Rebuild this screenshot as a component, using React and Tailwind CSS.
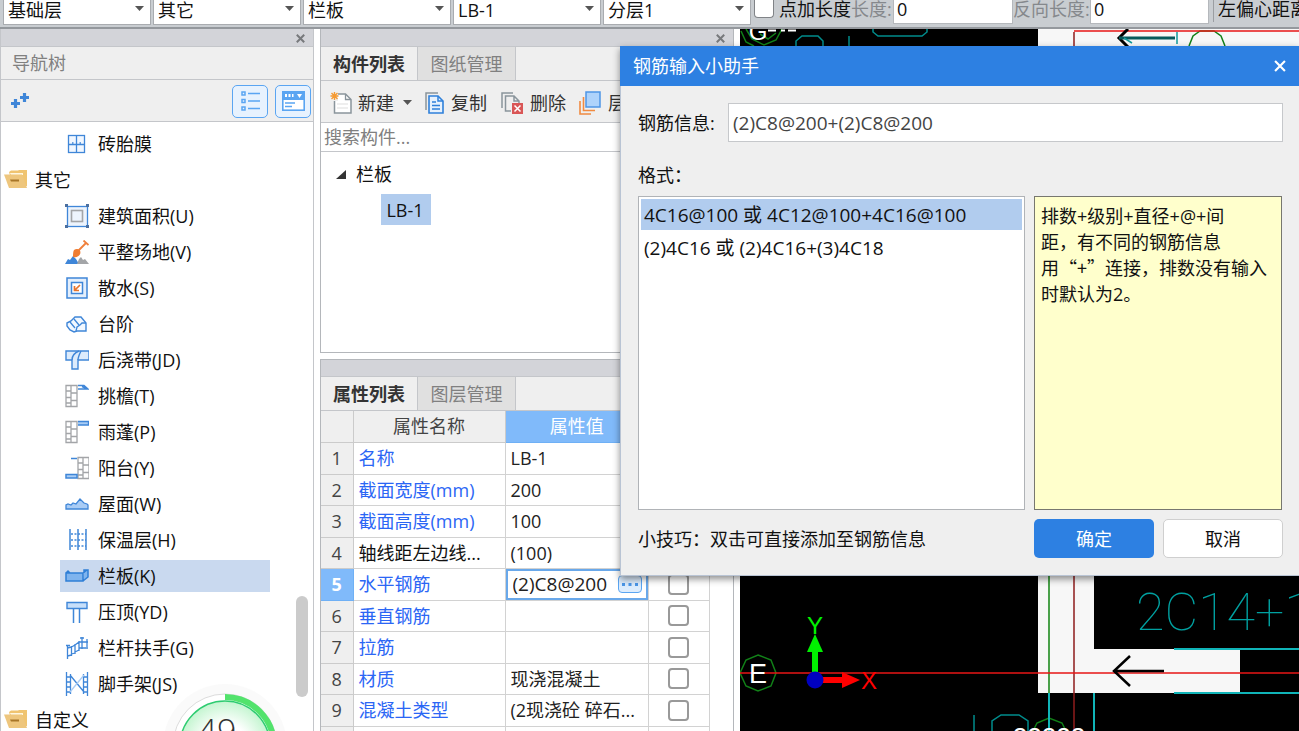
import React, { useState } from "react";

const B = "#3f86d8";
const L = "#a9ccf5";
const G = "#a3a5a8";

const Svg = ({ size = 24, children }) => (
  <svg width={size} height={size} viewBox={`0 0 ${size} ${size}`} fill="none" aria-hidden="true" className="shrink-0">
    {children}
  </svg>
);

const Wall = ({ x = 0 }) => (
  <g stroke={G} strokeWidth="1.3" transform={`translate(${x} 0)`}>
    <path d="M1 1.5h11v21H1zM6 1.5v7M6 8.5v8M6 16.5v6M1 7h5M6 9h6M1 13.5h5M6 16.500h6M1 19h5" />
  </g>
);

const icons = {
  brick: (
    <Svg>
      <g stroke={B} strokeWidth="1.3">
        <rect x="3.500" y="3.500" width="16" height="17" fill="#f1f7ff" />
        <path d="M11.500 3.500v17M3.500 12.500h16" />
        <path d="M7 11h1.500M14.500 11h1.500" />
      </g>
    </Svg>
  ),
  area: (
    <Svg>
      <rect x="2.500" y="2.500" width="20" height="20" stroke={B} strokeWidth="1.300" fill="#edf4fd" />
      <rect x="6.500" y="6.500" width="11" height="11" stroke={G} strokeWidth="1.600" />
      <path d="M0 0h3v3H0zM21 0h3v3h-3zM0 21h3v3H0zM21 21h3v3h-3z" fill="#4b6f9f" />
    </Svg>
  ),
  site: (
    <Svg>
      <path d="M0 24l3-5 2 1 3-4 3 3 3 5z" fill={B} />
      <path d="M12 24l2-5 2-2 2 3 2-1 4 5z" fill={G} />
      <path d="M13 11l8-8M18.500.5l5 4.500" stroke="#f0803c" strokeWidth="1.800" />
      <path d="M9 10c2-1.500 4-1.500 6 .5.800 2 .5 4-1.500 5.500-2 1.500-4 1.500-5.500 1 0-2.500 0-5 1-7z" fill="#f07d32" />
    </Svg>
  ),
  apron: (
    <Svg>
      <rect x="2" y="2" width="20" height="20" stroke={B} strokeWidth="1.500" fill="#e4effc" />
      <rect x="6.500" y="6.500" width="11" height="11" stroke={B} strokeWidth="1.500" fill="#fff" />
      <path d="M15 9l-5 5M9.500 10v4.500H14" stroke="#e8742c" strokeWidth="1.700" />
    </Svg>
  ),
  steps: (
    <Svg>
      <path d="M2 11l4-2 4-4h6l5 6v8h-9l-3 1-4-2-3-4z" stroke={B} strokeWidth="1.400" fill="#f2f8ff" />
      <path d="M5 10l5 6M9 7l5 6M11 19l1-4 3-2 2-2h4" stroke={B} strokeWidth="1.300" />
    </Svg>
  ),
  strip: (
    <Svg>
      <path d="M1 3h23v9H13v9H7v-9H1z" stroke={B} strokeWidth="1.400" fill="#dcebfc" />
      <path d="M7 12c0-4 2-7 7-9M13 12c0-3 1-5 3-9" stroke={B} strokeWidth="1.400" />
    </Svg>
  ),
  eave: (
    <Svg>
      <Wall />
      <path d="M13 1.500h6l4 3.500H13M17 2.500l6 2.500" stroke={B} strokeWidth="1.500" />
    </Svg>
  ),
  canopy: (
    <Svg>
      <Wall />
      <path d="M13 1.500h10.500V5H13" stroke={B} strokeWidth="1.400" fill={L} />
    </Svg>
  ),
  balcony: (
    <Svg>
      <Wall x={12} />
      <path d="M6 2.500h6M1 18.500h11v3.500H1z" stroke={B} strokeWidth="1.500" fill={L} />
    </Svg>
  ),
  roof: (
    <Svg>
      <path d="M1 17v-4l2-1 3 1 2-2 3 1 4-5 4 4 3 1 1 1v4z" stroke={B} strokeWidth="1.300" fill={L} />
    </Svg>
  ),
  insulation: (
    <Svg>
      <path d="M5 1v21M13 1v21M21 1v21" stroke={B} strokeWidth="1.500" />
      <path d="M6 6h15M6 12h15M6 18h15" stroke={B} strokeWidth="1.300" strokeDasharray="2 1.500" />
    </Svg>
  ),
  panel: (
    <Svg>
      <path d="M1 9h17v8H1zM18 17l5-4V6h-4v3M1 9l2-2 2 2M18 9l4-3" stroke="#2f7fd6" strokeWidth="1.500" fill="#7fb4ee" />
    </Svg>
  ),
  coping: (
    <Svg>
      <path d="M2 2.500h20v6H2z" stroke={B} strokeWidth="1.400" fill="#c7dffa" />
      <path d="M8.500 8.500V23M14.500 8.500V23" stroke={B} strokeWidth="1.500" />
    </Svg>
  ),
  rail: (
    <Svg>
      <path d="M2.500 9v14M1 9.500h4M6.500 10v10M10 8v10M14 5v10M17 1v12M15 2h4M22 3v8M2.500 12l4-1M6.500 11l3.500-2M10 9l4-3M14 6h9M2.500 20l4-1M6.500 18l3.500-1M10 16l4-2M14 12h9" stroke={B} strokeWidth="1.300" />
    </Svg>
  ),
  scaffold: (
    <Svg>
      <path d="M1.500 0v24M5.500 2v20M18.500 2v20M22.500 0v24M1 5h5M1 10h5M1 15h5M1 20h5M18 5h5M18 10h5M18 15h5M18 20h5M5 3l14 17" stroke={B} strokeWidth="1.300" />
      <path d="M5 20L19 3" stroke={L} strokeWidth="1.300" />
    </Svg>
  ),
  folder: (
    <Svg>
      <path d="M5 4l2-1.500h7L15 2h8v16H9z" fill="#f0c470" />
      <path d="M6 5h13v2H7z" fill="#fff6df" />
      <path d="M0 6.500h18L23 20H5z" fill="#eec67d" />
      <path d="M6 11.500h9v2H7z" fill="#a87628" />
    </Svg>
  ),
};

const treeRows = [
  ["brick", "砖胎膜"],
  ["folder", "其它"],
  ["area", "建筑面积(U)"],
  ["site", "平整场地(V)"],
  ["apron", "散水(S)"],
  ["steps", "台阶"],
  ["strip", "后浇带(JD)"],
  ["eave", "挑檐(T)"],
  ["canopy", "雨蓬(P)"],
  ["balcony", "阳台(Y)"],
  ["roof", "屋面(W)"],
  ["insulation", "保温层(H)"],
  ["panel", "栏板(K)"],
  ["coping", "压顶(YD)"],
  ["rail", "栏杆扶手(G)"],
  ["scaffold", "脚手架(JS)"],
  ["folder", "自定义"],
];

const properties = [
  ["名称", "LB-1"],
  ["截面宽度(mm)", "200"],
  ["截面高度(mm)", "100"],
  ["轴线距左边线...", "(100)"],
  ["水平钢筋", "(2)C8@200"],
  ["垂直钢筋", ""],
  ["拉筋", ""],
  ["材质", "现浇混凝土"],
  ["混凝土类型", "(2现浇砼 碎石..."],
];

const Caret = ({ className = "" }) => (
  <svg width="9" height="5" viewBox="0 0 9 5" aria-hidden="true" className={className}>
    <path d="M0 0h9L4.500 5z" fill="#555" />
  </svg>
);

const Cross = ({ size = 9, color = "#77797c", width = 2 }) => (
  <svg width={size} height={size} viewBox="0 0 9 9" aria-hidden="true">
    <path d="M.8.8l7.400 7.400M8.200.8L.8 8.200" stroke={color} strokeWidth={width} />
  </svg>
);

function TopBar() {
  return (
    <header className="flex h-[29px] shrink-0 items-start border-b-2 border-[#94989d] bg-[#c9cdd1] pl-[3px]">
      {[["楼层", "基础层"], ["类别", "其它"], ["类型", "栏板"], ["构件", "LB-1"], ["分层", "分层1"]].map(([label, value]) => (
        <div key={label} className="relative mr-[2px] h-[25px] w-[148px] shrink-0">
          <select aria-label={label} defaultValue={value} className="-mt-[6px] block h-[31px] w-full appearance-none border border-[#a9acb0] bg-white pl-[4px] leading-[24px] outline-none">
            <option>{value}</option>
          </select>
          <Caret className="pointer-events-none absolute right-[7px] top-[6px]" />
        </div>
      ))}
      <label className="ml-[1px] flex shrink-0 items-start whitespace-nowrap">
        <input type="checkbox" className="mr-[5px] h-[18px] w-[20px] appearance-none rounded-b-[4px] border border-t-0 border-[#808387] bg-white" />
        <span className="leading-[19px]">点加长度</span>
      </label>
      <label className="flex shrink-0 items-start text-[#85888c]">
        <span className="w-[42px] whitespace-nowrap leading-[19px]">长度:</span>
        <input defaultValue="0" className="h-[24px] w-[120px] border border-t-0 border-[#b5b8bc] bg-white pb-[6px] pl-[3px] text-[#111] outline-none" />
      </label>
      <label className="flex shrink-0 items-start text-[#85888c]">
        <span className="w-[77px] whitespace-nowrap leading-[19px]">反向长度:</span>
        <input defaultValue="0" className="h-[24px] w-[119px] border border-t-0 border-[#b5b8bc] bg-white pb-[6px] pl-[3px] text-[#111] outline-none" />
      </label>
      <span className="ml-[4px] h-[22px] shrink-0 border-l border-[#9b9ea2] pl-[4px] whitespace-nowrap leading-[19px]">左偏心距离</span>
    </header>
  );
}

function NavTree() {
  const [active, setActive] = useState("栏板(K)");
  return (
    <aside className="relative flex w-[314px] shrink-0 flex-col overflow-hidden border-x border-[#c4c6ca] bg-white">
      <div className="flex h-[18px] shrink-0 items-center justify-end border-b border-[#c4c6ca] bg-[#d3d4d9] pr-[8px] pt-[1px]">
        <button aria-label="关闭导航树"><Cross /></button>
      </div>
      <h2 className="h-[33px] shrink-0 border-b border-[#c4c6ca] bg-[#efefef] pl-[11px] leading-[32px] text-[#808080]">导航树</h2>
      <div className="flex h-[42px] shrink-0 items-center gap-[7px] border-b border-[#c4c6ca] bg-[#efefef] pl-[9px] pr-[2px] pt-[1px]">
        <button aria-label="展开全部" className="mr-auto">
          <svg width="19" height="16" viewBox="0 0 19 16" aria-hidden="true">
            <path d="M5.500 6v9M1 10.500h9M14.500 0v9M10 4.500h9" stroke={B} strokeWidth="3.200" />
          </svg>
        </button>
        <button aria-label="列表视图" className="flex h-[33px] w-[36px] items-center justify-center rounded-[5px] border border-[#5aa5f2] bg-[#e7f2fe]">
          <svg width="19" height="20" viewBox="0 0 19 20" fill="none" stroke="#5aa5f2" aria-hidden="true">
            <path d="M1 1h3v3H1zM1 8.500h3v3H1zM1 16h3v3H1z" strokeWidth="1.500" />
            <path d="M7 2.500h12M7 10h12M7 17.500h12" strokeWidth="1.600" />
          </svg>
        </button>
        <button aria-label="窗格视图" className="flex h-[33px] w-[36px] items-center justify-center rounded-[5px] border border-[#5aa5f2] bg-[#e7f2fe]">
          <svg width="23" height="20" viewBox="0 0 23 20" aria-hidden="true">
            <rect x=".8" y=".8" width="21.400" height="18.400" fill="#fff" stroke="#5aa5f2" strokeWidth="1.600" />
            <path d="M1 1h21v8H1z" fill="#5aa5f2" />
            <path d="M3 3h2v3H3zM6.500 3h2v3h-2zM10 3h1.500v3H10zM15 3h5l-2.500 4z" fill="#fff" />
            <path d="M3 12h10M3 15.500h7" stroke="#5aa5f2" strokeWidth="1.500" />
          </svg>
        </button>
      </div>
      <div className="flex min-h-0 flex-1 overflow-hidden">
        <ul className="flex-1 pt-[4px]">
          {treeRows.map(([icon, label]) => (
            <li key={label} className={icon === "folder" ? "flex h-[36px] items-center pl-[3px]" : "flex h-[36px] items-center pl-[59px]"}>
              <button
                onClick={() => setActive(label)}
                className={
                  icon === "folder"
                    ? "flex h-[32px] items-center gap-[7px]"
                    : active === label
                      ? "flex h-[32px] w-[210px] items-center gap-[9px] bg-[#c9d9ef] pl-[5px]"
                      : "flex h-[32px] w-[210px] items-center gap-[9px] pl-[5px]"
                }
              >
                {icons[icon]}
                <span className="whitespace-nowrap">{label}</span>
              </button>
            </li>
          ))}
        </ul>
        <div className="flex flex-col justify-end pb-[34px] pr-[5px]">
          <div className="h-[101px] w-[12px] rounded-full bg-[#cbcbcb]" />
        </div>
      </div>
      <div className="pointer-events-none absolute bottom-[-78px] left-[161px] h-[126px] w-[126px]">
        <svg width="126" height="126" viewBox="0 0 126 126" aria-hidden="true">
          <defs>
            <radialGradient id="gauge">
              <stop offset="0.500" stopColor="#ffffff" />
              <stop offset="1" stopColor="#c4f5d0" />
            </radialGradient>
          </defs>
          <circle cx="63" cy="63" r="62" fill="#f9f9f9" fillOpacity=".8" />
          <circle cx="63" cy="63" r="52" fill="#fff" stroke="#dcdcdc" />
          <path d="M63 14a49 49 0 0 1 49 49" fill="none" stroke="#52e36c" strokeWidth="6" />
          <circle cx="63" cy="63" r="45" fill="url(#gauge)" stroke="#2ecc71" strokeWidth="1.500" />
          <text x="55" y="61" textAnchor="middle" fontFamily="Open Sans" fontWeight="300" fontSize="34" fill="#333">49</text>
        </svg>
      </div>
    </aside>
  );
}

function Tabs({ first, second }) {
  return (
    <div role="tablist" className="flex h-[34px] shrink-0 border-b border-[#c4c6ca] bg-[#efefef]">
      <button role="tab" aria-selected="true" className="w-[97px] border-r border-[#c4c6ca] font-bold text-[#333]">{first}</button>
      <button role="tab" aria-selected="false" className="w-[98px] border-r border-[#c4c6ca] bg-[#e0e0e0] text-[#808080]">{second}</button>
    </div>
  );
}

function ComponentList() {
  return (
    <section className="flex h-[324px] shrink-0 flex-col border-x border-b border-[#b4b7bb] bg-white">
      <div className="flex h-[18px] shrink-0 items-center justify-end border-b border-[#c4c6ca] bg-[#d3d4d9] pr-[8px] pt-[1px]">
        <button aria-label="关闭构件列表"><Cross /></button>
      </div>
      <Tabs first="构件列表" second="图纸管理" />
      <div className="flex h-[42px] shrink-0 items-center border-b border-[#c4c6ca] bg-[#efefef] pl-[9px] pt-[2px] text-[#333]">
        <button className="mr-[13px] flex items-center gap-[5px]">
          <svg width="23" height="24" viewBox="0 0 23 24" fill="none" aria-hidden="true">
            <path d="M4.500 3h11l5.500 5.500V22H4.500z" fill="#fff" stroke="#8a959c" strokeWidth="1.500" />
            <path d="M15.500 3v5.500H21" stroke="#8a959c" strokeWidth="1.300" />
            <path d="M7 13h11M7 17h11" stroke="#ddd" />
            <path d="M0 0h8v10H0z" fill="#efefef" />
            <path d="M4.500 1v8M.5 5h8M1.500 2l6 6M7.500 2l-6 6" stroke="#f59a32" strokeWidth="1.400" />
          </svg>
          <span>新建</span>
          <Caret className="ml-[4px]" />
        </button>
        <button className="mr-[14px] flex items-center gap-[7px]">
          <svg width="19" height="22" viewBox="0 0 19 22" fill="none" aria-hidden="true">
            <path d="M1 18V1h12" stroke="#8a959c" strokeWidth="1.500" />
            <path d="M4 4h9l5 5v12H4z" fill="#e6f1fd" stroke="#2f80da" strokeWidth="1.600" />
            <path d="M13 4v5h5M7 10h4M7 13.500h8M7 17h8" stroke="#2f80da" strokeWidth="1.500" />
          </svg>
          <span>复制</span>
        </button>
        <button className="mr-[13px] flex items-center gap-[7px]">
          <svg width="22" height="22" viewBox="0 0 22 22" fill="none" aria-hidden="true">
            <path d="M1 16V1h11" stroke="#8a959c" strokeWidth="1.500" />
            <path d="M10 19H4.500V4H13l5 5v3M13 4v5h5" stroke="#8a959c" strokeWidth="1.500" />
            <path d="M11 11h11v11H11z" fill="#d95656" />
            <path d="M13.500 13.500l6 6M19.500 13.500l-6 6" stroke="#fff" strokeWidth="1.500" />
          </svg>
          <span>删除</span>
        </button>
        <button className="flex items-center gap-[7px]">
          <svg width="22" height="24" viewBox="0 0 22 24" fill="none" aria-hidden="true">
            <path d="M1 10v13h11M4.500 6v13.500H16" stroke="#f08b42" strokeWidth="1.600" />
            <path d="M7 1h14v15H7z" fill="#aed3fb" stroke="#4f96e6" strokeWidth="1.500" />
          </svg>
          <span>层</span>
        </button>
      </div>
      <input aria-label="搜索构件" placeholder="搜索构件..." className="h-[29px] w-full shrink-0 border-b border-[#c4c6ca] bg-white pl-[3px] outline-none placeholder:text-[#808080]" />
      <div className="flex flex-col items-start pl-[15px] pt-[4px]">
        <button className="flex h-[36px] items-center gap-[10px]">
          <svg width="10" height="9" viewBox="0 0 10 9" aria-hidden="true"><path d="M10 0v9H0z" fill="#333" /></svg>
          <span>栏板</span>
        </button>
        <button className="ml-[45px] mt-[2px] h-[31px] w-[50px] bg-[#b1ccee] pr-[2px]">LB-1</button>
      </div>
    </section>
  );
}

function PropertyTable() {
  return (
    <section className="mt-[6px] flex min-h-0 flex-1 flex-col overflow-hidden border-x border-t border-[#b4b7bb] bg-white">
      <div className="h-[17px] shrink-0 border-b border-[#c4c6ca] bg-[#d3d4d9]" />
      <Tabs first="属性列表" second="图层管理" />
      <table className="w-[388px] shrink-0 table-fixed border-collapse text-[#222]">
        <colgroup>
          <col className="w-[32px]" />
          <col className="w-[152px]" />
          <col className="w-[143px]" />
          <col className="w-[61px]" />
        </colgroup>
        <thead>
          <tr className="h-[31px] bg-[#efefef] text-[#444]">
            <th className="border-b border-r border-[#cbcbcb]" />
            <th className="border-b border-r border-[#cbcbcb] p-0 font-normal">属性名称</th>
            <th className="border-b border-[#6fb0f5] bg-[#80bafa] p-0 font-normal text-white">属性值</th>
            <th className="border-b border-r border-[#cbcbcb]" />
          </tr>
        </thead>
        <tbody>
          {properties.map(([name, value], i) => (
            <tr key={name} className="odd:h-[32px] even:h-[31px]">
              <td className={i === 4 ? "border border-l-0 border-[#6fb0f5] bg-[#80bafa] p-0 text-center font-bold text-white" : "border-b border-r border-[#cbcbcb] bg-[#efefef] p-0 text-center text-[#444]"}>{i + 1}</td>
              <td className={i === 3 ? "border-b border-r border-[#d2d2d2] py-0 pl-[5px] pr-0 whitespace-nowrap text-[#111]" : "border-b border-r border-[#d2d2d2] py-0 pl-[5px] pr-0 whitespace-nowrap text-[#2b66f5]"}>{name}</td>
              {i === 4 ? (
                <td className="border-b border-r border-[#d2d2d2] p-0">
                  <div className="flex h-[31px] items-center border-2 border-[#69a8ea] pl-[5px] pr-[4px]">
                    <input aria-label="水平钢筋" defaultValue={value} className="w-0 min-w-0 flex-1 text-[19px] outline-none" />
                    <button aria-label="编辑钢筋" className="flex h-[18px] w-[24px] items-center justify-center rounded-[4px] border border-[#5aa5f2] bg-[#dcecfd]">
                      <svg width="16" height="3" viewBox="0 0 16 3" aria-hidden="true"><path d="M0 0h3v3H0zM6.500 0h3v3h-3zM13 0h3v3h-3z" fill="#4a96e8" /></svg>
                    </button>
                  </div>
                </td>
              ) : (
                <td className="border-b border-r border-[#d2d2d2] py-0 pl-[5px] pr-0 whitespace-nowrap">{value}</td>
              )}
              <td className="border-b border-r border-[#d2d2d2] p-0 text-center">
                {i > 3 && <input type="checkbox" aria-label={`附加 ${name}`} className="mx-auto block h-[21px] w-[21px] appearance-none rounded-[4px] border-2 border-[#999] bg-white" />}
              </td>
            </tr>
          ))}
          <tr className="h-[32px]">
            <td className="border-r border-[#cbcbcb] bg-[#efefef]" />
            <td className="border-r border-[#d2d2d2]" />
            <td className="border-r border-[#d2d2d2]" />
            <td className="border-r border-[#d2d2d2] p-0 align-top">
              <input type="checkbox" aria-label="附加" className="mx-auto mt-[4px] block h-[21px] w-[21px] appearance-none rounded-[4px] border-2 border-[#999] bg-white" />
            </td>
          </tr>
        </tbody>
      </table>
    </section>
  );
}

function Drawing() {
  return (
    <svg className="h-full min-w-0 flex-1 bg-black" role="img" aria-label="图纸" fill="none">
      <g transform="translate(-740 -29)">
        <path d="M1038 29h400v17h-400zM1038 570h56v79h146v44h-202z" fill="#f7f7f7" />
        <g stroke="#118018" strokeWidth="1.500">
          <path d="M741 31l5 11 8 4M746 29l6 10 12 6 12-5 6-11M760 34l8 5 8-6" />
          <path d="M1189 46l4-10 7-5h14l7 5 4 10" />
          <path d="M758 655l13 5 5 13-5 13-13 5-12-5-6-13 6-13z" />
          <path d="M1033 731l4-8 12-5 13 5 4 8" />
        </g>
        <g stroke="#008c8c" strokeWidth="1.500">
          <path d="M796 46v-5l6-5h16l5 5v5M849 36v10M873 29v3l5 4h44l5-4v-3" />
          <path d="M974 715v16M992 731v-10l9-6h18l9 6v10" />
        </g>
        <path d="M1174 649h264M1174 693h264M1049 693v45M1094 693v45" stroke="#10b4b8" strokeWidth="2" />
        <path d="M1049 576v117" stroke="#4aa14a" strokeWidth="2" />
        <path d="M1074 576v162M1074 46V32" stroke="#8f1d1d" strokeWidth="1.500" />
        <path d="M1074 31h364M740 673h698" stroke="#e81616" strokeWidth="1.500" />
        <path d="M1128 29l-9 9 9 9" stroke="#000" strokeWidth="3" />
        <path d="M1119 38h56" stroke="#065a5c" strokeWidth="3" />
        <path d="M1177 32v12M1132 43l-8-5" stroke="#129a9a" strokeWidth="1.500" />
        <path d="M1130 656l-16 15 16 15M1114 671h50" stroke="#000" strokeWidth="2.500" />
        <path d="M815 652v22" stroke="#00f000" strokeWidth="6" />
        <path d="M815 634l8 18h-16z" fill="#00f000" />
        <path d="M820 680h24" stroke="#f00" strokeWidth="6" />
        <path d="M842 672l18 8-18 8z" fill="#f00" />
        <circle cx="815" cy="680" r="8.500" fill="#0000c0" />
        <g fontFamily="Liberation Sans" textAnchor="middle">
          <text x="815" y="634" fontSize="24" fill="#00f000">Y</text>
          <text x="869" y="689" fontSize="24" fill="#f00">X</text>
          <text x="758" y="683" fontSize="27" fill="#fff">E</text>
          <text x="758" y="40" fontSize="24" fill="#fff">G</text>
          <text x="1049" y="746" fontSize="26" fill="#fff">22222</text>
        </g>
        <path d="M768 30.500h8M781 30.500h4M788 30.500h8" stroke="#fff" strokeWidth="2" />
        <text x="1136" y="630" fontFamily="Roboto" fontWeight="100" fontSize="52" fill="#00a0a0">2C14+10</text>
      </g>
    </svg>
  );
}

function RebarDialog() {
  return (
    <div role="dialog" aria-labelledby="rebar-title" className="absolute left-[620px] right-0 top-[46px] bg-[#efefef] shadow-[0_3px_7px_rgba(0,0,0,0.45)]">
      <div className="flex h-[40px] items-center justify-between bg-[#2d80e2] pl-[13px] pr-[13px] text-white">
        <h2 id="rebar-title">钢筋输入小助手</h2>
        <button aria-label="关闭"><Cross size={12} color="#fff" width={1.6} /></button>
      </div>
      <div className="border-b border-l border-[#b9c4d4] pb-[17px] pl-[17px] pr-[16px] pt-[17px]">
        <label className="flex items-center">
          <span className="w-[90px] whitespace-nowrap">钢筋信息:</span>
          <input defaultValue="(2)C8@200+(2)C8@200" className="h-[39px] min-w-0 flex-1 border border-[#c6c8cb] bg-white pl-[4px] text-[19px] text-[#444] outline-none" />
        </label>
        <div id="formats" className="flex h-[54px] items-center pt-[11px]">格式：</div>
        <div className="flex h-[314px] gap-[9px] pr-[1px]">
          <ul role="listbox" aria-labelledby="formats" className="flex-1 border border-[#b0b3b7] bg-white p-[2px] text-[19px]">
            <li role="option" aria-selected="true" className="h-[31px] bg-[#b1ccee] pl-[3px] leading-[32px]">4C16@100 或 4C12@100+4C16@100</li>
            <li role="option" aria-selected="false" className="h-[34px] pl-[3px] leading-[36px]">(2)4C16 或 (2)4C16+(3)4C18</li>
          </ul>
          <p className="w-[248px] border border-[#77776f] bg-[#ffffcc] py-[6px] pl-[6px] leading-[26px]">
            排数+级别+直径+@+间
            <br />
            距，有不同的钢筋信息
            <br />
            用<span className="font-['Noto_Sans_CJK_SC'] leading-none">“+”</span>连接，排数没有输入
            <br />
            时默认为2。
          </p>
        </div>
        <div className="mt-[9px] flex items-center gap-[9px]">
          <span className="mr-auto whitespace-nowrap">小技巧：双击可直接添加至钢筋信息</span>
          <button className="h-[39px] w-[120px] rounded-[5px] bg-[#2d80e2] text-white">确定</button>
          <button className="h-[39px] w-[120px] rounded-[5px] border border-[#cfcfcf] bg-white">取消</button>
        </div>
      </div>
    </div>
  );
}

export default function App() {
  return (
    <div lang="zh-CN" className="relative flex h-screen flex-col overflow-hidden bg-white font-['Open_Sans','Noto_Sans_CJK_SC',sans-serif] text-[18px] leading-[24px] text-[#111]">
      <TopBar />
      <main className="flex min-h-0 flex-1">
        <NavTree />
        <div className="ml-[6px] mr-[6px] flex w-[414px] shrink-0 flex-col">
          <ComponentList />
          <PropertyTable />
        </div>
        <Drawing />
      </main>
      <RebarDialog />
    </div>
  );
}
